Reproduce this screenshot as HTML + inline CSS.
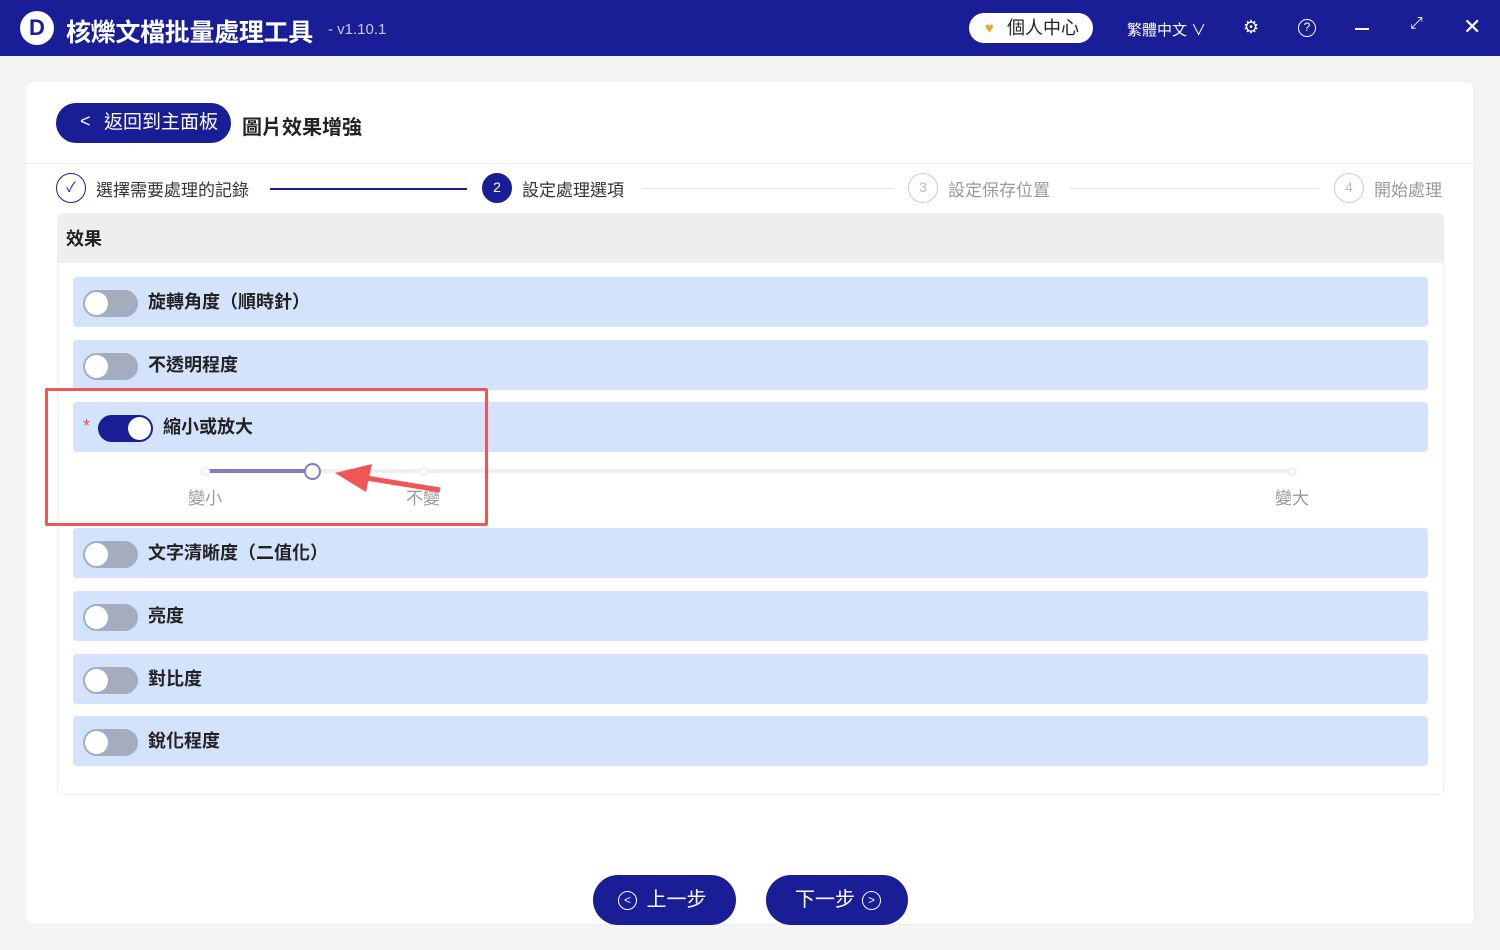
<!DOCTYPE html>
<html><head><meta charset="utf-8"><style>
*{margin:0;padding:0;box-sizing:border-box}
body{width:1500px;height:950px;background:#f4f4f4;font-family:"Liberation Sans","Noto Sans CJK TC",sans-serif;position:relative;overflow:hidden}
.abs{position:absolute}
.top{left:0;top:0;width:1500px;height:56px;background:#191d96;color:#fff}
.card{left:25px;top:81px;width:1450px;height:844px;background:#fff;border-radius:8px;border:1px solid #eee}
.row{position:absolute;left:73px;width:1355px;height:50px;background:#d3e3fb;border-radius:4px}
.tog{position:absolute;left:10px;top:13px;width:55px;height:27px;border-radius:14px;background:#a3adbf}
.tog::after{content:"";position:absolute;left:2px;top:2px;width:23px;height:23px;border-radius:50%;background:#fff}
.tog.on{background:#191d96}
.tog.on::after{left:30px}
.lbl{position:absolute;left:75px;top:0;line-height:50px;font-size:18px;font-weight:bold;color:#222}
.step{font-size:17px;color:#333;top:176px}
.circ{width:30px;height:30px;border-radius:50%;border:1.5px solid #ccc;color:#bbb;font-size:14px;text-align:center;line-height:27px}
.btn{top:875px;height:50px;background:#191d96;border-radius:25px;color:#fff;font-size:20px;line-height:50px;text-align:center}
</style></head><body>
<div class="abs top">
 <div class="abs" style="left:20px;top:11px;width:34px;height:34px;border-radius:50%;background:#fff;color:#191d96;font-weight:bold;font-size:22px;text-align:center;line-height:34px">D</div>
 <div class="abs" style="left:66px;top:13px;font-size:25px;font-weight:bold;letter-spacing:-0.3px">核爍文檔批量處理工具</div>
 <div class="abs" style="left:328px;top:21px;font-size:15px;color:#c8cae8">- v1.10.1</div>
 <div class="abs" style="left:969px;top:13px;width:124px;height:30px;background:#fff;border-radius:15px;color:#222;font-size:18px;line-height:30px;padding-left:38px">個人中心</div>
 <div class="abs" style="left:985px;top:20px;color:#f5a623;font-size:15px">♥</div>
 <div class="abs" style="left:1127px;top:19px;font-size:15px">繁體中文 ∨</div>
 <div class="abs" style="left:1243px;top:17px;font-size:18px">⚙</div>
 <div class="abs" style="left:1298px;top:19px;width:18px;height:18px;border:1.5px solid #fff;border-radius:50%;font-size:12px;text-align:center;line-height:15px">?</div>
 <div class="abs" style="left:1355px;top:28px;width:14px;height:1.5px;background:#fff"></div>
 <div class="abs" style="left:1410px;top:15px;font-size:16px">⤢</div>
 <div class="abs" style="left:1463px;top:14px;font-size:22px">✕</div>
</div>
<div class="abs card"></div>
<div class="abs" style="left:26px;top:163px;width:1448px;height:1px;background:#eee"></div>
<div class="abs" style="left:56px;top:103px;width:175px;height:40px;background:#191d96;border-radius:20px;color:#fff;font-size:19px;line-height:40px;padding-left:48px">返回到主面板</div>
<div class="abs" style="left:80px;top:111px;color:#fff;font-size:18px">&lt;</div>
<div class="abs" style="left:242px;top:111px;font-size:20px;font-weight:bold;color:#222">圖片效果增強</div>
<div class="abs circ" style="left:56px;top:173px;border-color:#191d96;color:#191d96">✓</div>
<div class="abs step" style="left:96px">選擇需要處理的記錄</div>
<div class="abs" style="left:270px;top:188px;width:197px;height:1.5px;background:#191d96"></div>
<div class="abs circ" style="left:482px;top:173px;background:#191d96;border-color:#191d96;color:#fff">2</div>
<div class="abs step" style="left:522px">設定處理選項</div>
<div class="abs" style="left:643px;top:188px;width:250px;height:1px;background:#e5e5e5"></div>
<div class="abs circ" style="left:908px;top:173px">3</div>
<div class="abs step" style="left:948px;color:#999">設定保存位置</div>
<div class="abs" style="left:1069px;top:188px;width:250px;height:1px;background:#e5e5e5"></div>
<div class="abs circ" style="left:1334px;top:173px">4</div>
<div class="abs step" style="left:1374px;color:#999">開始處理</div>
<div class="abs" style="left:57px;top:213px;width:1387px;height:582px;border:1px solid #eee;border-radius:6px;overflow:hidden">
 <div style="height:49px;background:#eeeeee;font-size:18px;font-weight:bold;color:#222;line-height:50px;padding-left:8px">效果</div>
</div>
<div class="row" style="top:277px"><div class="tog"></div><div class="lbl">旋轉角度（順時針）</div></div>
<div class="row" style="top:340px"><div class="tog"></div><div class="lbl">不透明程度</div></div>
<div class="row" style="top:402px"><span style="position:absolute;left:10px;top:14px;color:#f04a5a;font-size:18px">*</span><div class="tog on" style="left:25px"></div><div class="lbl" style="left:90px">縮小或放大</div></div>
<div class="abs" style="left:205px;top:469px;width:1087px;height:4px;background:#eeeeee;border-radius:2px"></div>
<div class="abs" style="left:205px;top:469px;width:107px;height:4px;background:#7a80c0"></div>
<div class="abs" style="left:201px;top:467px;width:9px;height:9px;border-radius:50%;background:#fff;border:2px solid #eee"></div>
<div class="abs" style="left:419px;top:467px;width:9px;height:9px;border-radius:50%;background:#fff;border:2px solid #eee"></div>
<div class="abs" style="left:1288px;top:467px;width:9px;height:9px;border-radius:50%;background:#fff;border:2px solid #eee"></div>
<div class="abs" style="left:304px;top:463px;width:17px;height:17px;border-radius:50%;background:#fff;border:2px solid #7a80c0"></div>
<div class="abs" style="left:188px;top:484px;font-size:17px;color:#999">變小</div>
<div class="abs" style="left:406px;top:484px;font-size:17px;color:#999">不變</div>
<div class="abs" style="left:1275px;top:484px;font-size:17px;color:#999">變大</div>
<div class="abs" style="left:45px;top:388px;width:443px;height:138px;border:3px solid #f25555;border-radius:2px"></div>
<svg class="abs" style="left:0;top:0" width="1500" height="950"><line x1="440" y1="490" x2="360" y2="477" stroke="#f25555" stroke-width="5"/><polygon points="335,473 372,464 366,492" fill="#f25555"/></svg>
<div class="row" style="top:528px"><div class="tog"></div><div class="lbl">文字清晰度（二值化）</div></div>
<div class="row" style="top:591px"><div class="tog"></div><div class="lbl">亮度</div></div>
<div class="row" style="top:654px"><div class="tog"></div><div class="lbl">對比度</div></div>
<div class="row" style="top:716px"><div class="tog"></div><div class="lbl">銳化程度</div></div>
<div class="abs btn" style="left:593px;width:143px;padding-left:24px">上一步</div>
<div class="abs" style="left:618px;top:891px;width:19px;height:19px;border:1.5px solid #fff;border-radius:50%;color:#fff;font-size:12px;text-align:center;line-height:16px">&lt;</div>
<div class="abs btn" style="left:766px;width:142px;padding-right:24px">下一步</div>
<div class="abs" style="left:862px;top:891px;width:19px;height:19px;border:1.5px solid #fff;border-radius:50%;color:#fff;font-size:12px;text-align:center;line-height:16px">&gt;</div>
</body></html>
